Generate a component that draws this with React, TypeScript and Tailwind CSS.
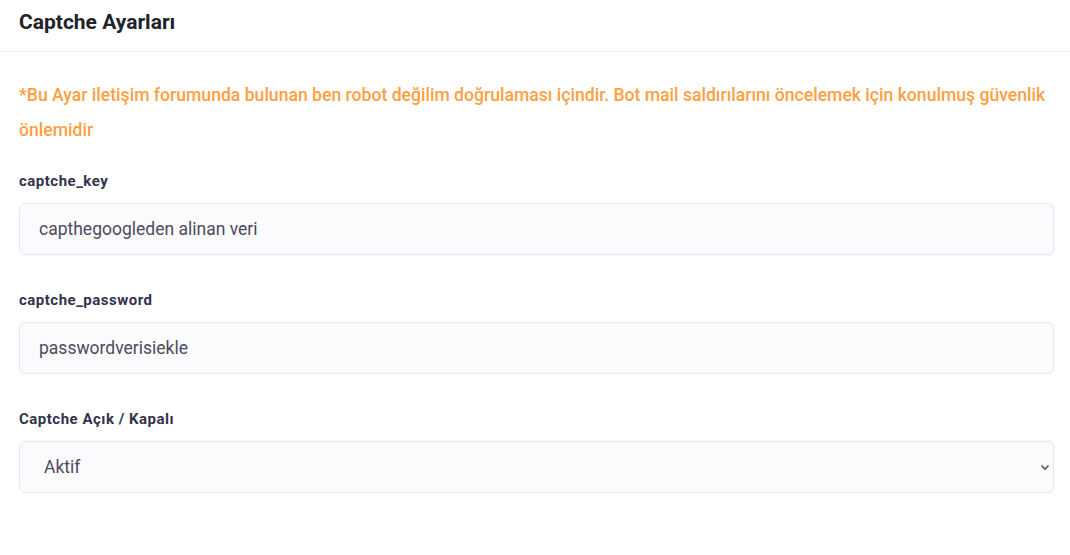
import React from "react";

const Field = ({ label, value }: { label: string; value: string }) => (
  <div className="mb-[35px]">
    <label className="block text-[15px] font-bold tracking-[0.5px] text-[#33334d] leading-5 mb-3">
      {label}
    </label>
    <input
      readOnly
      value={value}
      className="w-full h-[52px] rounded-md border border-[#e4e4f5] bg-[#fbfbfe] px-[19px] text-[17.5px] text-[#4b4b5c] outline-none"
    />
  </div>
);

export default function App() {
  return (
    <div className="w-[1070px] min-h-[555px] bg-white font-['Roboto',sans-serif]">
      <div className="h-[52px] flex items-center px-[19px] border-b border-[#f1f1f4]">
        <h2 className="text-[21px] font-bold text-[#222328] -mt-[6px]">Captche Ayarları</h2>
      </div>
      <div className="pl-[19px] pr-[16px] pt-[26px]">
        <p className="text-[17.6px] font-medium text-[#ff9f43] leading-[35px] mb-[23px]">
          *Bu Ayar iletişim forumunda bulunan ben robot değilim doğrulaması içindir. Bot mail saldırılarını öncelemek için konulmuş güvenlik önlemidir
        </p>
        <Field label="captche_key" value="capthegoogleden alinan veri" />
        <Field label="captche_password" value="passwordverisiekle" />
        <div>
          <label className="block text-[15px] font-bold tracking-[0.5px] text-[#33334d] leading-5 mb-3">
            Captche Açık / Kapalı
          </label>
          <div className="relative">
            <select
              defaultValue="1"
              className="w-full h-[52px] appearance-none rounded-md border border-[#e4e4f5] bg-[#fbfbfe] px-[24px] text-[17.5px] text-[#4b4b5c] outline-none"
            >
              <option value="1">Aktif</option>
              <option value="0">Pasif</option>
            </select>
            <svg
              className="absolute right-[4px] top-1/2 -translate-y-1/2 pointer-events-none"
              width="10"
              height="10"
              viewBox="0 0 10 10"
            >
              <path d="M1.5 3.5 L5 7 L8.5 3.5" fill="none" stroke="#555" strokeWidth="1.6" />
            </svg>
          </div>
        </div>
      </div>
    </div>
  );
}
